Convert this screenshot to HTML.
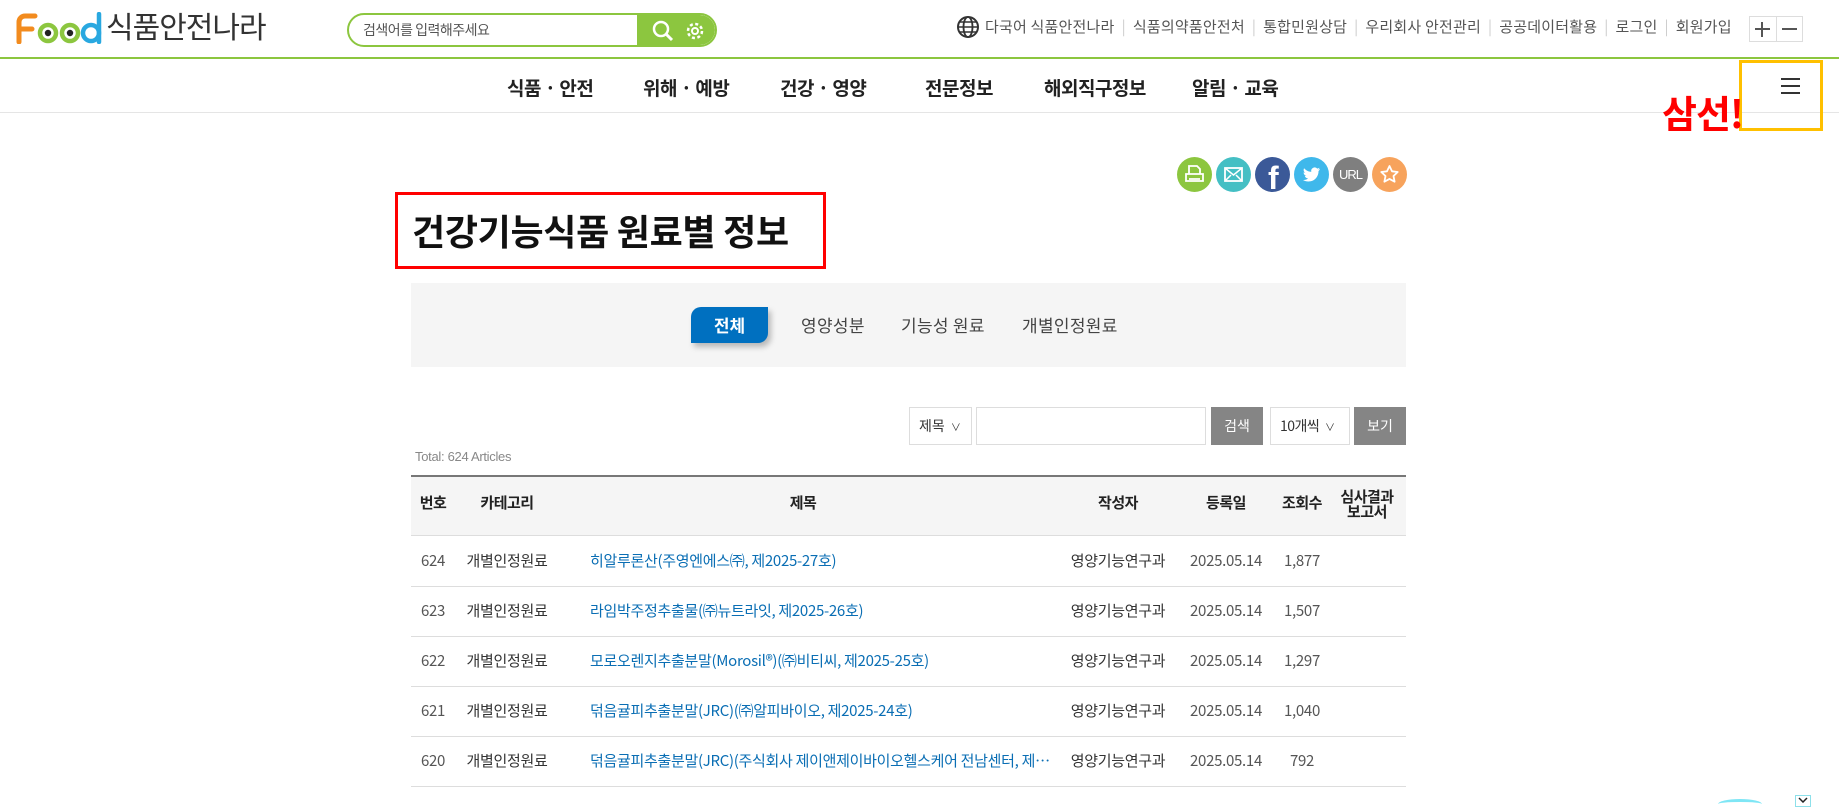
<!DOCTYPE html>
<html><head><meta charset="utf-8">
<style>
*{margin:0;padding:0;box-sizing:border-box}
body{width:1839px;height:803px;overflow:hidden;background:#fff;font-family:"Liberation Sans","Noto Sans CJK KR",sans-serif;color:#333;position:relative}
.a{position:absolute;white-space:nowrap}
.kr{font-family:"Noto Sans CJK KR","Liberation Sans",sans-serif}
.nav{top:74px;font-size:19px;font-weight:bold;color:#222;letter-spacing:-0.5px}
.top{top:16px;font-size:15px;color:#555;letter-spacing:0.2px}
.sep{color:#ccc;margin:0 7px}
.ic{position:absolute;top:157px;width:35px;height:35px;border-radius:50%}
.th{top:492px;font-size:15px;font-weight:bold;color:#222;transform:translateX(-50%);letter-spacing:-0.5px}
.row{position:absolute;left:411px;width:995px;height:50px;border-bottom:1px solid #ddd;font-size:15px;letter-spacing:-0.3px}
.row span{position:absolute;top:13px;white-space:nowrap}
.c{transform:translateX(-50%)}
</style></head><body>
<!-- logo -->
<svg class="a" style="left:15px;top:12px" width="92" height="32" viewBox="0 0 92 32">
<path d="M4 30V10a6 6 0 0 1 6-6h10M4 17h13" fill="none" stroke="#f28b1e" stroke-width="5" stroke-linecap="round"/>
<circle cx="33" cy="21" r="8" fill="none" stroke="#8cc63f" stroke-width="4.5"/><circle cx="33" cy="21" r="3.2" fill="#222"/>
<circle cx="55" cy="21" r="8" fill="none" stroke="#8cc63f" stroke-width="4.5"/><circle cx="55" cy="21" r="3.2" fill="#222"/>
<circle cx="76" cy="21" r="8" fill="none" stroke="#29a8e0" stroke-width="4.5"/><path d="M84 2v28" stroke="#29a8e0" stroke-width="4.5" stroke-linecap="round"/>
</svg>
<div class="a kr" style="left:106px;top:3px;font-size:30px;color:#333;letter-spacing:-1px">식품안전나라</div>
<!-- search -->
<div class="a" style="left:347px;top:13px;width:370px;height:34px;border:2px solid #8cc63f;border-radius:17px;background:#fff;overflow:hidden">
<div class="kr" style="position:absolute;left:14px;top:5px;font-size:14px;color:#555;letter-spacing:-0.5px">검색어를 입력해주세요</div>
<div style="position:absolute;right:0;top:0;width:78px;height:30px;background:#8cc63f;border-radius:0 15px 15px 0"></div>
<svg style="position:absolute;right:40px;top:4px" width="24" height="24" viewBox="0 0 24 24"><circle cx="10" cy="10" r="7" fill="none" stroke="#fff" stroke-width="2.5"/><path d="M15 15l6 6" stroke="#fff" stroke-width="3"/></svg>
<svg style="position:absolute;right:9px;top:5px" width="22" height="22" viewBox="0 0 22 22"><circle cx="11" cy="11" r="7" fill="none" stroke="#fff" stroke-width="2.5" stroke-dasharray="3 2.5"/><circle cx="11" cy="11" r="3" fill="none" stroke="#fff" stroke-width="2"/></svg>
</div>
<!-- top links -->
<svg class="a" style="left:956px;top:15px" width="24" height="24" viewBox="0 0 24 24"><circle cx="12" cy="12" r="10" fill="none" stroke="#333" stroke-width="2"/><ellipse cx="12" cy="12" rx="4.5" ry="10" fill="none" stroke="#333" stroke-width="1.8"/><path d="M2 12h20M4 7h16M4 17h16" stroke="#333" stroke-width="1.6"/></svg>
<div class="a top kr" style="left:985px">다국어 식품안전나라<span class="sep">|</span>식품의약품안전처<span class="sep">|</span>통합민원상담<span class="sep">|</span>우리회사 안전관리<span class="sep">|</span>공공데이터활용<span class="sep">|</span>로그인<span class="sep">|</span>회원가입</div>
<div class="a" style="left:1749px;top:16px;width:54px;height:26px;border:1px solid #ddd"></div>
<div class="a" style="left:1776px;top:16px;width:1px;height:26px;background:#ddd"></div>
<div class="a" style="left:1755px;top:28px;width:15px;height:2px;background:#555"></div>
<div class="a" style="left:1761px;top:22px;width:2px;height:15px;background:#555"></div>
<div class="a" style="left:1782px;top:28px;width:15px;height:2px;background:#555"></div>
<!-- lines -->
<div class="a" style="left:0;top:57px;width:1839px;height:2px;background:#8cc63f"></div>
<div class="a" style="left:0;top:112px;width:1839px;height:1px;background:#e5e5e5"></div>
<!-- nav -->
<div class="a nav kr" style="left:507px">식품 · 안전</div>
<div class="a nav kr" style="left:643px">위해 · 예방</div>
<div class="a nav kr" style="left:780px">건강 · 영양</div>
<div class="a nav kr" style="left:925px">전문정보</div>
<div class="a nav kr" style="left:1044px">해외직구정보</div>
<div class="a nav kr" style="left:1192px">알림 · 교육</div>
<!-- hamburger -->
<div class="a" style="left:1739px;top:60px;width:84px;height:71px;border:3px solid #ffc000"></div>
<div class="a" style="left:1781px;top:78px;width:19px;height:2px;background:#333"></div>
<div class="a" style="left:1781px;top:85px;width:19px;height:2px;background:#333"></div>
<div class="a" style="left:1781px;top:92px;width:19px;height:2px;background:#333"></div>
<div class="a kr" style="left:1662px;top:84px;font-size:38px;font-weight:bold;color:#f00;letter-spacing:-1px">삼선!</div>
<!-- share icons -->
<div class="ic" style="left:1177px;background:#8cc63f"><svg width="35" height="35" viewBox="0 0 35 35"><path d="M12 9h8l3 3v5H12z M9 17h17v7H9z M12 22h11" fill="none" stroke="#fff" stroke-width="1.8"/></svg></div>
<div class="ic" style="left:1216px;background:#44bfc4"><svg width="35" height="35" viewBox="0 0 35 35"><rect x="9" y="11" width="17" height="13" fill="none" stroke="#fff" stroke-width="1.8"/><path d="M9 11l8.5 7 8.5-7M9 24l6-6M26 24l-6-6" fill="none" stroke="#fff" stroke-width="1.5"/></svg></div>
<div class="ic" style="left:1255px;background:#3b5998;overflow:hidden"><div style="position:absolute;left:13px;top:3px;color:#fff;font-size:32px;font-weight:bold;font-family:'Liberation Sans',sans-serif">f</div></div>
<div class="ic" style="left:1294px;background:#3fb8eb"><svg width="35" height="35" viewBox="0 0 35 35"><path d="M26 12c-.7.3-1.4.5-2 .6.7-.5 1.3-1.1 1.5-1.9-.7.4-1.4.7-2.2.9a3.5 3.5 0 0 0-6 3.2c-2.9-.1-5.5-1.5-7.2-3.6-.9 1.6-.4 3.6 1.1 4.6-.6 0-1.1-.2-1.6-.4 0 1.7 1.2 3.2 2.8 3.5-.5.1-1.1.2-1.6.1.5 1.4 1.800 2.4 3.300 2.4A7 7 0 0 1 9 23c1.6 1 3.4 1.5 5.4 1.5 6.6 0 10.3-5.5 10.1-10.5.7-.5 1.2-1.1 1.5-2z" fill="#fff"/></svg></div>
<div class="ic" style="left:1333px;background:#7f7f7f;color:#fff;font-size:13px;text-align:center;line-height:35px;letter-spacing:-1px">URL</div>
<div class="ic" style="left:1372px;background:#f7a35c"><svg width="35" height="35" viewBox="0 0 35 35"><path d="M17.5 9l2.5 5.3 5.7.7-4.2 4 1.1 5.7-5.1-2.8-5.1 2.8 1.1-5.7-4.2-4 5.7-.7z" fill="none" stroke="#fff" stroke-width="1.8" stroke-linejoin="round"/></svg></div>
<!-- title -->
<div class="a" style="left:395px;top:192px;width:431px;height:77px;border:3px solid #f00"></div>
<div class="a kr" style="left:412px;top:204px;font-size:36px;font-weight:bold;color:#111;letter-spacing:-0.3px">건강기능식품 원료별 정보</div>
<!-- tabs -->
<div class="a" style="left:411px;top:283px;width:995px;height:84px;background:#f5f5f5"></div>
<div class="a kr" style="left:691px;top:307px;width:77px;height:36px;background:#0070c0;border-radius:10px 0 10px 0;box-shadow:3px 4px 6px rgba(0,0,0,.25);color:#fff;font-size:17px;font-weight:bold;text-align:center;line-height:36px">전체</div>
<div class="a kr" style="left:801px;top:312px;font-size:17px;color:#444;letter-spacing:0.3px">영양성분</div>
<div class="a kr" style="left:901px;top:312px;font-size:17px;color:#444;letter-spacing:0.3px">기능성 원료</div>
<div class="a kr" style="left:1022px;top:312px;font-size:17px;color:#444;letter-spacing:0.3px">개별인정원료</div>
<!-- search row -->
<div class="a kr" style="left:909px;top:407px;width:63px;height:38px;border:1px solid #ddd;font-size:14px;line-height:36px;padding-left:9px;color:#333">제목 <span style="font-size:10px;margin-left:3px">∨</span></div>
<div class="a" style="left:976px;top:407px;width:230px;height:38px;border:1px solid #ddd"></div>
<div class="a kr" style="left:1211px;top:407px;width:52px;height:38px;background:#858585;color:#fff;font-size:14px;text-align:center;line-height:38px">검색</div>
<div class="a kr" style="left:1270px;top:407px;width:80px;height:38px;border:1px solid #ddd;font-size:14px;line-height:36px;padding-left:9px;color:#333;letter-spacing:-0.5px">10개씩 <span style="font-size:10px;margin-left:3px">∨</span></div>
<div class="a kr" style="left:1354px;top:407px;width:52px;height:38px;background:#858585;color:#fff;font-size:14px;text-align:center;line-height:38px">보기</div>
<div class="a" style="left:415px;top:449px;font-size:13px;color:#888;letter-spacing:-0.3px">Total: 624 Articles</div>
<!-- table header -->
<div class="a" style="left:411px;top:475px;width:995px;height:61px;background:#f5f5f5;border-top:2px solid #777;border-bottom:1px solid #ddd"></div>
<div class="a th kr" style="left:433px">번호</div>
<div class="a th kr" style="left:507px">카테고리</div>
<div class="a th kr" style="left:803px">제목</div>
<div class="a th kr" style="left:1118px">작성자</div>
<div class="a th kr" style="left:1226px">등록일</div>
<div class="a th kr" style="left:1302px">조회수</div>
<div class="a kr" style="left:1367px;top:489px;transform:translateX(-50%);font-size:15px;font-weight:bold;color:#222;line-height:15px;text-align:center;letter-spacing:-0.5px">심사결과<br>보고서</div>
<!-- rows -->
<div class="row kr" style="top:537px"><span class="c" style="left:22px;color:#555">624</span><span class="c" style="left:96px">개별인정원료</span><span style="left:179px;color:#0a6eb4">히알루론산(주영엔에스㈜, 제2025-27호)</span><span class="c" style="left:707px">영양기능연구과</span><span class="c" style="left:815px;color:#555">2025.05.14</span><span class="c" style="left:891px;color:#555">1,877</span></div>
<div class="row kr" style="top:587px"><span class="c" style="left:22px;color:#555">623</span><span class="c" style="left:96px">개별인정원료</span><span style="left:179px;color:#0a6eb4">라임박주정추출물(㈜뉴트라잇, 제2025-26호)</span><span class="c" style="left:707px">영양기능연구과</span><span class="c" style="left:815px;color:#555">2025.05.14</span><span class="c" style="left:891px;color:#555">1,507</span></div>
<div class="row kr" style="top:637px"><span class="c" style="left:22px;color:#555">622</span><span class="c" style="left:96px">개별인정원료</span><span style="left:179px;color:#0a6eb4">모로오렌지추출분말(Morosil®)(㈜비티씨, 제2025-25호)</span><span class="c" style="left:707px">영양기능연구과</span><span class="c" style="left:815px;color:#555">2025.05.14</span><span class="c" style="left:891px;color:#555">1,297</span></div>
<div class="row kr" style="top:687px"><span class="c" style="left:22px;color:#555">621</span><span class="c" style="left:96px">개별인정원료</span><span style="left:179px;color:#0a6eb4">덖음귤피추출분말(JRC)(㈜알피바이오, 제2025-24호)</span><span class="c" style="left:707px">영양기능연구과</span><span class="c" style="left:815px;color:#555">2025.05.14</span><span class="c" style="left:891px;color:#555">1,040</span></div>
<div class="row kr" style="top:737px"><span class="c" style="left:22px;color:#555">620</span><span class="c" style="left:96px">개별인정원료</span><span style="left:179px;color:#0a6eb4;width:465px;overflow:hidden;text-overflow:ellipsis">덖음귤피추출분말(JRC)(주식회사 제이앤제이바이오헬스케어 전남센터, 제2025-23호)</span><span class="c" style="left:707px">영양기능연구과</span><span class="c" style="left:815px;color:#555">2025.05.14</span><span class="c" style="left:891px;color:#555">792</span></div>
<!-- bottom widgets -->
<div class="a" style="left:1718px;top:799px;width:44px;height:10px;border-radius:50%;border-top:3px solid #7fe6f5"></div>
<div class="a" style="left:1795px;top:795px;width:16px;height:12px;border:1px solid #8de0ea;background:#fff"></div>
<svg class="a" style="left:1798px;top:797px" width="10" height="6" viewBox="0 0 10 6"><path d="M1 1l4 4 4-4" fill="none" stroke="#222" stroke-width="1.5"/></svg>
</body></html>
